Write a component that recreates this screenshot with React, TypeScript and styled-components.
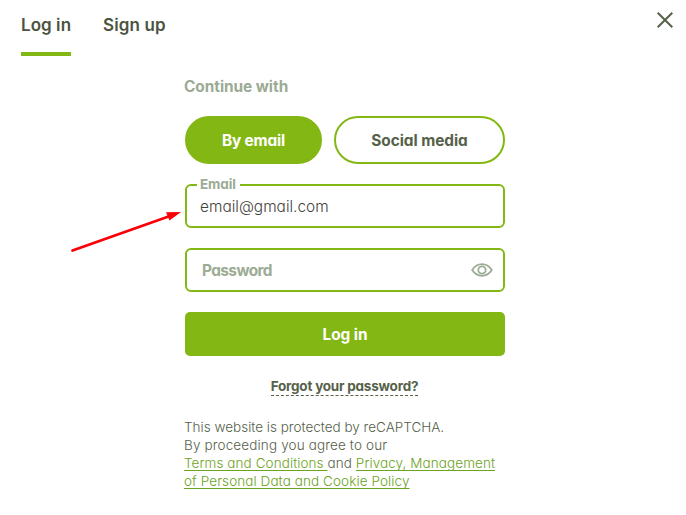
import React from 'react';
import styled, { createGlobalStyle } from 'styled-components';

const green = '#83b814';
const dark = '#56614a';
const muted = '#9cab94';

const GlobalStyle = createGlobalStyle`
  *, *::before, *::after { box-sizing: border-box; }
  body { margin: 0; background: #fff; overflow: hidden; }
  body, button, input {
    font-family: Inter, "Liberation Sans", sans-serif;
    font-feature-settings: "cv11" 1;
  }
`;

const Page = styled.main`
  position: relative;
  width: 686px;
  height: 515px;
  background: #fff;
  color: ${dark};
`;

const Header = styled.header`
  display: flex;
  justify-content: space-between;
  align-items: flex-start;
  height: 76px;
  padding: 0 13px 0 21px;
`;

const Tabs = styled.nav`
  display: flex;
  gap: 32px;
`;

const Tab = styled.button<{ $active?: boolean; $spacing: number }>`
  height: 56px;
  padding: 15px 0 17px;
  border: 0;
  border-bottom: 4px solid ${p => (p.$active ? green : 'transparent')};
  background: none;
  color: #4c5340;
  font-size: 17px;
  font-weight: 600;
  line-height: 20px;
  letter-spacing: ${p => p.$spacing}px;
  white-space: nowrap;
`;

const CloseButton = styled.button`
  display: flex;
  margin-top: 12px;
  padding: 0;
  border: 0;
  background: none;
`;

const Form = styled.form`
  display: flex;
  flex-direction: column;
  width: 320px;
  margin-left: 185px;
`;

const Caption = styled.div`
  height: 40px;
  margin-left: -1px;
  line-height: 21px;
  color: ${muted};
  font-size: 15.4px;
  font-weight: 700;
  letter-spacing: -0.04px;
`;

const Methods = styled.div`
  display: flex;
  gap: 12px;
  margin-bottom: 20px;
`;

const Method = styled.button<{ $filled?: boolean; $width: number }>`
  width: ${p => p.$width}px;
  height: 48px;
  padding: 0;
  border: 2px solid ${green};
  border-radius: 24px;
  background: ${p => (p.$filled ? green : '#fff')};
  color: ${p => (p.$filled ? '#fff' : dark)};
  font-size: 15.4px;
  font-weight: 700;
  letter-spacing: ${p => (p.$filled ? -0.2 : -0.05)}px;
`;

const Field = styled.div`
  position: relative;
  display: flex;
  align-items: center;
  height: 44px;
  margin-bottom: 20px;
  padding: 0 10px 0 13px;
  border: 2px solid ${green};
  border-radius: 6px;
`;

const FieldLabel = styled.label`
  position: absolute;
  left: 10px;
  top: -10px;
  padding: 0 4px 0 3px;
  background: #fff;
  color: ${muted};
  font-size: 13.5px;
  font-weight: 700;
  line-height: 16px;
  letter-spacing: -0.1px;
`;

const Input = styled.input`
  flex: 1;
  min-width: 0;
  padding: 0;
  border: 0;
  outline: 0;
  background: none;
  color: #3f443b;
  font-size: 15.4px;
  font-weight: 300;
  letter-spacing: 0.02px;

  &::placeholder {
    color: ${muted};
    font-weight: 700;
    letter-spacing: -0.6px;
    text-indent: 2px;
    opacity: 1;
  }
`;

const Submit = styled.button`
  height: 44px;
  border: 0;
  border-radius: 5px;
  background: ${green};
  color: #fff;
  font-size: 15.4px;
  font-weight: 700;
  letter-spacing: -0.05px;
`;

const Forgot = styled.a`
  align-self: center;
  height: 19px;
  margin: 21px 1px 22px 0;
  border-bottom: 1px dashed ${dark};
  color: ${dark};
  font-size: 13.5px;
  font-weight: 700;
  line-height: 18px;
  letter-spacing: -0.22px;
  white-space: nowrap;
`;

const Legal = styled.p`
  margin: 0 0 0 -1px;
  font-size: 13.5px;
  font-weight: 300;
  line-height: 18px;
  white-space: nowrap;
`;

const LegalLine = styled.span<{ $spacing: number }>`
  display: block;
  letter-spacing: ${p => p.$spacing}px;
`;

const LegalLink = styled.a`
  color: #6ba322;
  text-decoration: underline;
  text-decoration-thickness: 1px;
  text-underline-offset: 2px;
  text-decoration-skip-ink: none;
`;

const Pointer = styled.svg`
  position: absolute;
  left: 60px;
  top: 200px;
  pointer-events: none;
`;

export default function App() {
  return (
    <Page>
      <GlobalStyle />
      <Header>
        <Tabs>
          <Tab $active $spacing={0.06}>Log in</Tab>
          <Tab $spacing={0.12}>Sign up</Tab>
        </Tabs>
        <CloseButton aria-label="Close">
          <svg width="16" height="16" viewBox="0 0 16 16" fill="none" stroke="#56614a" strokeWidth="2">
            <path d="M0.7 0.7 15.3 15.3M15.3 0.7 0.7 15.3" />
          </svg>
        </CloseButton>
      </Header>
      <Form>
        <Caption>Continue with</Caption>
        <Methods>
          <Method type="button" $filled $width={137}>By email</Method>
          <Method type="button" $width={171}>Social media</Method>
        </Methods>
        <Field>
          <FieldLabel htmlFor="email">Email</FieldLabel>
          <Input id="email" defaultValue="email@gmail.com" />
        </Field>
        <Field>
          <Input type="password" placeholder="Password" />
          <svg width="22" height="14" viewBox="0 0 22 14" fill="none" stroke="#9cab94" strokeWidth="1.8">
            <path d="M1.2 7C3.5 3.6 7 1.2 11 1.2S18.500 3.600 20.800 7C18.500 10.400 15 12.800 11 12.800S3.500 10.400 1.200 7Z" />
            <circle cx="11" cy="7" r="3.700" />
          </svg>
        </Field>
        <Submit type="button">Log in</Submit>
        <Forgot>Forgot your password?</Forgot>
        <Legal>
          <LegalLine $spacing={0}>This website is protected by reCAPTCHA.</LegalLine>
          <LegalLine $spacing={0.14}>By proceeding you agree to our</LegalLine>
          <LegalLine $spacing={0.08}>
            <LegalLink>Terms and Conditions </LegalLink>and <LegalLink>Privacy, Management</LegalLink>
          </LegalLine>
          <LegalLine $spacing={0.09}>
            <LegalLink>of Personal Data and Cookie Policy</LegalLink>
          </LegalLine>
        </Legal>
      </Form>
      <Pointer width="124" height="56" viewBox="60 200 124 56">
        <path d="M72.5 250.5 170 216" stroke="#fb0006" strokeWidth="2.8" strokeLinecap="round" />
        <path d="M181 212 166 212.3 169.5 220.5Z" fill="#fb0006" />
      </Pointer>
    </Page>
  );
}
